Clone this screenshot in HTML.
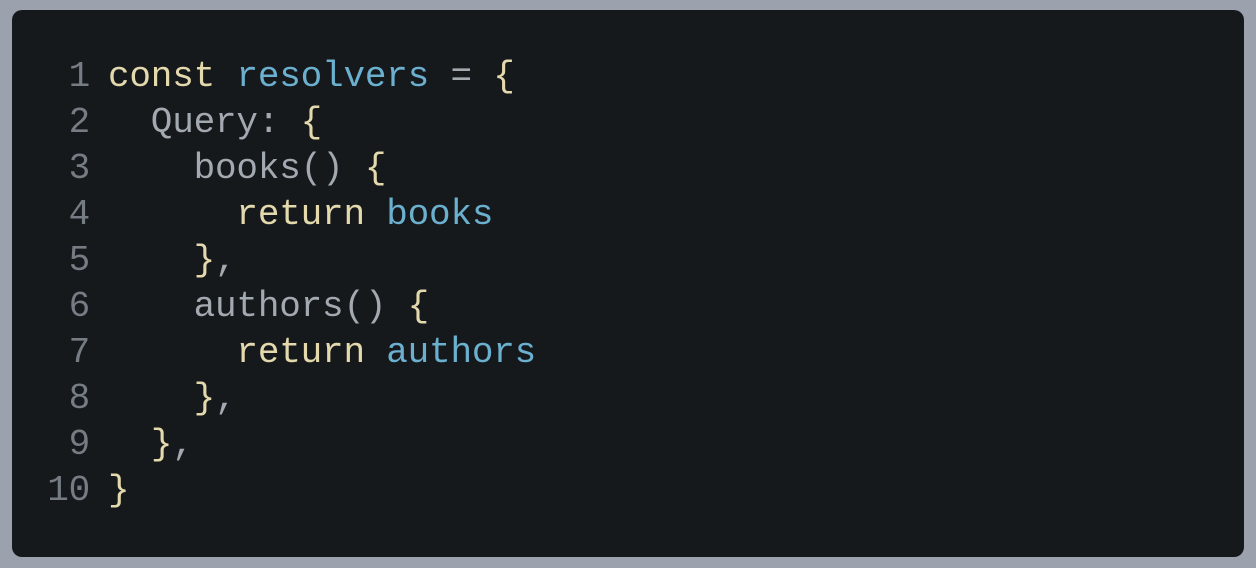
<!DOCTYPE html>
<html><head><style>
html,body{margin:0;padding:0;width:1256px;height:568px;background:#9ca2ad;overflow:hidden}
.card{position:absolute;left:12px;top:10px;width:1232px;height:547px;background:#16191c;border-radius:10px}
pre{position:absolute;left:0;top:44px;margin:0;font-family:"Liberation Mono",monospace;font-size:36px;line-height:46px;color:#a3a9b0;letter-spacing:-0.2px}
.n{color:#767c84;display:inline-block;width:78px;text-align:right;margin-right:18px}
.k{color:#e3d9ad}
.b{color:#6bb0cf}
.p{color:#e3d9ad}
</style></head><body>
<div class="card"><pre>
<span class="n">1</span><span class="k">const</span> <span class="b">resolvers</span> = <span class="p">{</span>
<span class="n">2</span>  Query: <span class="p">{</span>
<span class="n">3</span>    books() <span class="p">{</span>
<span class="n">4</span>      <span class="k">return</span> <span class="b">books</span>
<span class="n">5</span>    <span class="p">}</span>,
<span class="n">6</span>    authors() <span class="p">{</span>
<span class="n">7</span>      <span class="k">return</span> <span class="b">authors</span>
<span class="n">8</span>    <span class="p">}</span>,
<span class="n">9</span>  <span class="p">}</span>,
<span class="n">10</span><span class="p">}</span></pre></div>
</body></html>
